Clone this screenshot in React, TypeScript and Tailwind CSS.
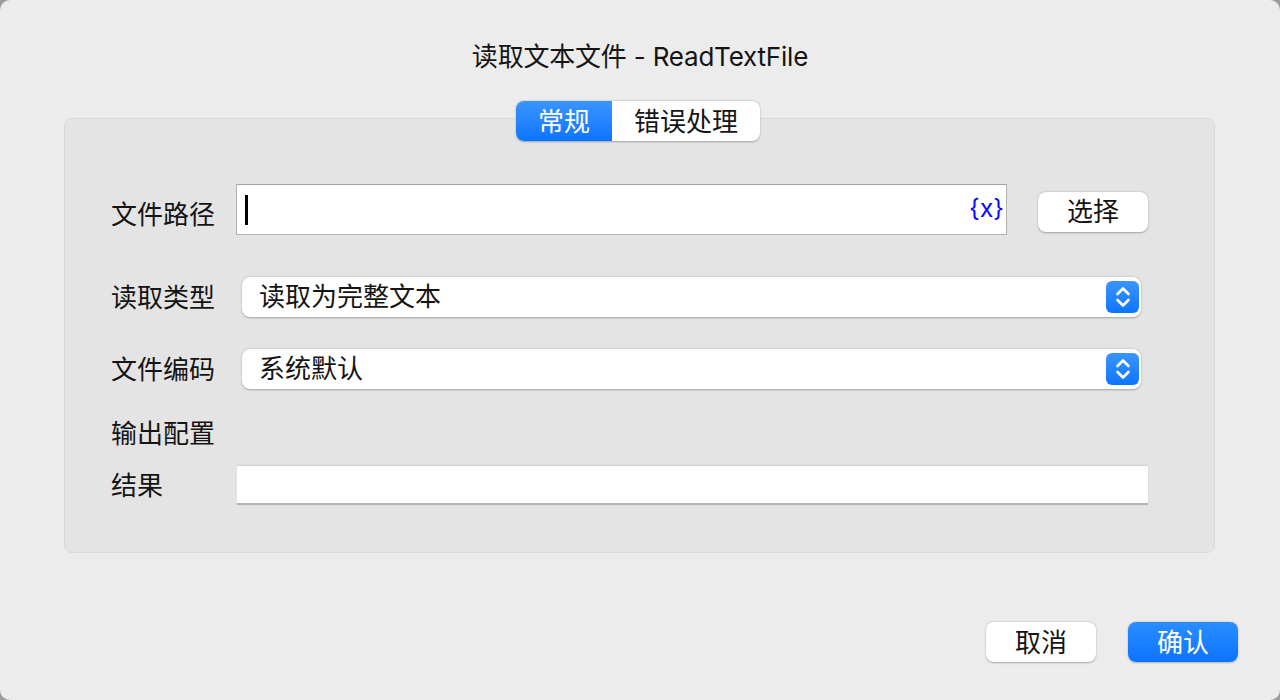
import React from "react"

const font = "font-['Inter','Noto_Sans_CJK_SC',sans-serif]"

function Stepper() {
  return (
    <div className="w-[33px] h-[32px] rounded-[6px] bg-gradient-to-b from-[#3a95ff] to-[#0a74ff] flex items-center justify-center">
      <svg width="16" height="24" viewBox="0 0 16 24" fill="none" stroke="white" strokeWidth="2.6" strokeLinecap="round" strokeLinejoin="round">
        <path d="M2.5 9 L8 3.5 L13.5 9" />
        <path d="M2.5 15 L8 20.5 L13.5 15" />
      </svg>
    </div>
  )
}

function Select({ value }: { value: string }) {
  return (
    <div className="w-[899px] h-[40px] bg-white rounded-[8px] shadow-[0_0.5px_2px_rgba(0,0,0,0.3)] flex items-center pl-[17px] pr-[2px]">
      <span className="flex-1 text-[26px] leading-none text-[#141414]">{value}</span>
      <Stepper />
    </div>
  )
}

export default function App() {
  return (
    <div className={`w-[1280px] h-[700px] bg-[#9c9c9c] ${font}`}>
      <div className="w-full h-full bg-[#ececec] rounded-[10px] flex flex-col">
        <div className="h-[114px] pt-[39px] flex justify-center">
          <h1 className="text-[26px] leading-[36px] text-[#141414] tracking-[-0.2px]">读取文本文件 - ReadTextFile</h1>
        </div>

        <div className="flex justify-center relative z-10 -mt-[13px] pr-[4px]">
          <div className="flex h-[40px] rounded-[8px] bg-white shadow-[0_0.5px_2px_rgba(0,0,0,0.3)] overflow-hidden">
            <div className="w-[96px] bg-gradient-to-b from-[#3a95ff] to-[#0a74ff] text-white text-[26px] flex items-center justify-center">常规</div>
            <div className="w-[148px] text-[#141414] text-[26px] flex items-center justify-center">错误处理</div>
          </div>
        </div>

        <div className="mx-[64px] mr-[65px] -mt-[23px] h-[435px] bg-[#e4e4e4] border border-[#d9d9d9] rounded-[8px] pl-[46px] pt-[65px]">
          <div className="flex items-center h-[51px]">
            <span className="w-[125px] text-[26px] text-[#141414] pt-[10px]">文件路径</span>
            <div className="w-[771px] h-[51px] bg-white border-[1.5px] border-[#b3b3b3] border-t-[#a3a3a3] flex items-center pl-[8px] pr-[2px]">
              <div className="w-[2.5px] h-[30px] bg-black" />
              <div className="flex-1" />
              <span className="text-[#0a0aff] text-[25px] leading-none pb-[2px]">{"{x}"}</span>
            </div>
            <button className="ml-[31px] w-[110px] h-[40px] mt-[4px] bg-white rounded-[8px] shadow-[0_0.5px_2px_rgba(0,0,0,0.3)] text-[26px] text-[#141414] flex items-center justify-center">选择</button>
          </div>

          <div className="flex items-center mt-[42px]">
            <span className="w-[131px] text-[26px] text-[#141414]">读取类型</span>
            <Select value="读取为完整文本" />
          </div>

          <div className="flex items-center mt-[32px]">
            <span className="w-[131px] text-[26px] text-[#141414]">文件编码</span>
            <Select value="系统默认" />
          </div>

          <div className="mt-[27px] h-[34px] flex items-center text-[26px] text-[#141414]">输出配置</div>

          <div className="flex items-center mt-[15px]">
            <span className="w-[126px] text-[26px] text-[#141414]">结果</span>
            <div className="w-[911px] h-[40px] bg-white border-t border-[#d2d2d2] border-b-2 border-b-[#b5b5b5] shadow-[0_0_1px_rgba(0,0,0,0.15)]" />
          </div>
        </div>

        <div className="flex justify-end gap-[32px] pr-[42px] mt-[69px]">
          <button className="w-[110px] h-[40px] bg-white rounded-[8px] shadow-[0_0.5px_2px_rgba(0,0,0,0.3)] text-[26px] text-[#141414] flex items-center justify-center">取消</button>
          <button className="w-[110px] h-[40px] rounded-[8px] bg-gradient-to-b from-[#2a8dff] to-[#0a74ff] shadow-[0_0.5px_2px_rgba(0,0,0,0.25)] text-[26px] text-white flex items-center justify-center">确认</button>
        </div>
      </div>
    </div>
  )
}
